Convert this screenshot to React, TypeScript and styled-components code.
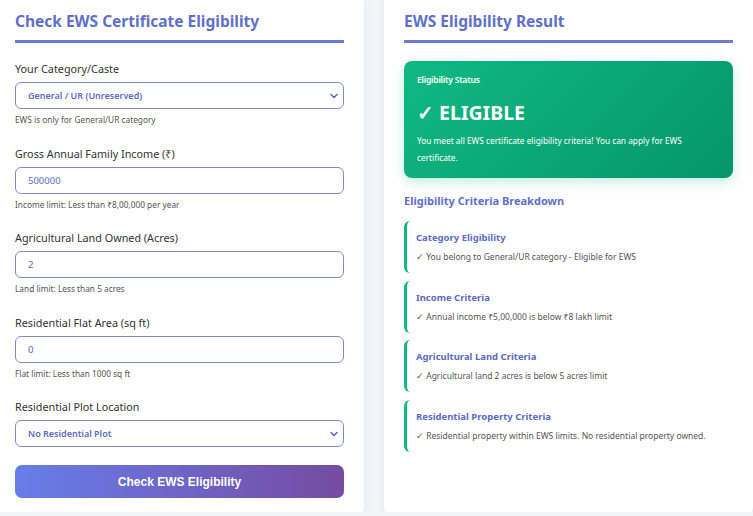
import styled, { createGlobalStyle } from "styled-components"
import { ChevronDown } from "lucide-react"

const GlobalStyle = createGlobalStyle`
  * { box-sizing: border-box; }
  html, body {
    margin: 0;
    padding: 0;
    background: #f2f4f8;
    overflow: hidden;
    font-family: "Noto Sans", "Open Sans", sans-serif;
  }
`

type Field = {
  label: string
  kind: "select" | "input"
  value: string
  hint?: string
}

const fields: Field[] = [
  { label: "Your Category/Caste", kind: "select", value: "General / UR (Unreserved)", hint: "EWS is only for General/UR category" },
  { label: "Gross Annual Family Income (₹)", kind: "input", value: "500000", hint: "Income limit: Less than ₹8,00,000 per year" },
  { label: "Agricultural Land Owned (Acres)", kind: "input", value: "2", hint: "Land limit: Less than 5 acres" },
  { label: "Residential Flat Area (sq ft)", kind: "input", value: "0", hint: "Flat limit: Less than 1000 sq ft" },
  { label: "Residential Plot Location", kind: "select", value: "No Residential Plot" },
]

const criteria = [
  { title: "Category Eligibility", text: "✓ You belong to General/UR category - Eligible for EWS" },
  { title: "Income Criteria", text: "✓ Annual income ₹5,00,000 is below ₹8 lakh limit" },
  { title: "Agricultural Land Criteria", text: "✓ Agricultural land 2 acres is below 5 acres limit" },
  { title: "Residential Property Criteria", text: "✓ Residential property within EWS limits. No residential property owned." },
]

const App = () => {
  return (
    <>
      <GlobalStyle />
      <Page>
        <Card>
          <Heading>Check EWS Certificate Eligibility</Heading>
          {fields.map(f => (
            <FieldGroup key={f.label}>
              <Label>{f.label}</Label>
              {f.kind === "select" ? (
                <SelectWrap>
                  <Control bold={1}>{f.value}</Control>
                  <Chevron>
                    <ChevronDown size={12} strokeWidth={3.2} />
                  </Chevron>
                </SelectWrap>
              ) : (
                <Control>{f.value}</Control>
              )}
              {f.hint && <Hint>{f.hint}</Hint>}
            </FieldGroup>
          ))}
          <SubmitButton>Check EWS Eligibility</SubmitButton>
        </Card>

        <Card>
          <Heading>EWS Eligibility Result</Heading>
          <StatusBox>
            <StatusLabel>Eligibility Status</StatusLabel>
            <StatusValue>✓ ELIGIBLE</StatusValue>
            <StatusText>
              You meet all EWS certificate eligibility criteria! You can apply for EWS certificate.
            </StatusText>
          </StatusBox>
          <SubHeading>Eligibility Criteria Breakdown</SubHeading>
          <CriteriaList>
            {criteria.map(c => (
              <CriteriaItem key={c.title}>
                <CriteriaTitle>{c.title}</CriteriaTitle>
                <CriteriaText>{c.text}</CriteriaText>
              </CriteriaItem>
            ))}
          </CriteriaList>
        </Card>
      </Page>
    </>
  )
}
export default App

const Page = styled.div`
  display: grid;
  grid-template-columns: 369px 369px;
  gap: 20px;
  height: 522px;
  /* page is scrolled a little, top and left edges of the cards are cut */
  margin: -10px 0 0 -5px;
`

const Card = styled.div`
  background: #fff;
  border-radius: 12px;
  padding: 20px;
  box-shadow: 0 2px 10px rgba(60, 70, 120, 0.06);
`

const Heading = styled.h2`
  margin: 0 0 18px;
  padding-bottom: 7px;
  border-bottom: 3px solid #6a7bd0;
  color: #6070c9;
  font-size: 15.5px;
  line-height: 23px;
  font-weight: 700;
`

const FieldGroup = styled.div`
  display: flex;
  flex-direction: column;
  margin-bottom: 19.5px;
  &:last-of-type {
    margin-bottom: 18px;
  }
`

const Label = styled.label`
  font-size: 10.8px;
  line-height: 16px;
  color: #333;
  margin-bottom: 5px;
`

const SelectWrap = styled.div`
  position: relative;
`

const Control = styled.div<{ bold?: number }>`
  height: 27px;
  display: flex;
  align-items: center;
  padding: 0 12px;
  border: 1.3px solid #838ac2;
  border-radius: 6px;
  background: #fff;
  color: #5b6bc2;
  font-size: ${p => (p.bold ? "9px" : "9.5px")};
  font-weight: ${p => (p.bold ? 600 : 400)};
`

const Chevron = styled.span`
  position: absolute;
  right: 4px;
  top: 8px;
  color: #5b6bc2;
  display: flex;
`

const Hint = styled.small`
  margin-top: 5px;
  font-size: 8.3px;
  line-height: 12px;
  color: #555;
`

const SubmitButton = styled.button`
  width: 100%;
  height: 33px;
  border: none;
  border-radius: 7px;
  background: linear-gradient(90deg, #667eea 0%, #764ba2 100%);
  color: #fff;
  font-family: "Liberation Sans", Arial, sans-serif;
  font-weight: 700;
  font-size: 12px;
  cursor: pointer;
`

const StatusBox = styled.div`
  background: linear-gradient(135deg, #10b981 0%, #059669 100%);
  border-radius: 8px;
  padding: 13px 13px 12px;
  color: #fff;
  box-shadow: 0 4px 12px rgba(16, 185, 129, 0.25);
`

const StatusLabel = styled.div`
  font-size: 8.5px;
  line-height: 12px;
  font-weight: 600;
  letter-spacing: -0.2px;
`

const StatusValue = styled.div`
  margin-top: 14px;
  font-size: 19.5px;
  line-height: 26px;
  font-weight: 700;
`

const StatusText = styled.p`
  margin: 6px 0 0;
  font-size: 8.3px;
  line-height: 17px;
  padding-right: 10px;
`

const SubHeading = styled.h3`
  margin: 15px 0 12px;
  font-size: 11px;
  line-height: 16px;
  font-weight: 700;
  color: #6070c9;
`

const CriteriaList = styled.div`
  display: flex;
  flex-direction: column;
  gap: 7.5px;
`

const CriteriaItem = styled.div`
  border-left: 3px solid #10b981;
  border-radius: 6px;
  padding: 10px 12px 10px 9px;
  background: #fff;
`

const CriteriaTitle = styled.div`
  font-size: 9.5px;
  line-height: 14px;
  font-weight: 700;
  color: #5b6bc2;
`

const CriteriaText = styled.div`
  margin-top: 6px;
  font-size: 8.5px;
  line-height: 12px;
  color: #555;
`
